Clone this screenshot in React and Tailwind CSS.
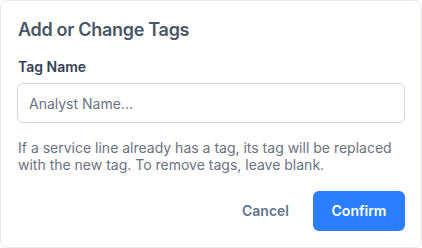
import React, { useState } from "react";

export default function App() {
  const [tag, setTag] = useState("");

  return (
    <div
      className="w-[422px] h-[248px] bg-white"
      style={{ fontFamily: "Inter, 'Noto Sans', sans-serif" }}
    >
      <div className="h-full rounded-lg border border-gray-200 bg-white px-4 pt-[15px]">
        <h2 className="pl-[1px] text-lg leading-7 font-semibold tracking-[-0.3px] text-gray-600">Add or Change Tags</h2>

        <label htmlFor="tag-name" className="mt-[13px] block pl-[1px] text-sm leading-5 font-semibold text-gray-700">
          Tag Name
        </label>
        <input
          id="tag-name"
          className="mt-[6px] block h-[40px] w-full rounded-md border border-gray-300 px-[11px] text-sm text-gray-700 placeholder:text-gray-500 outline-none"
          placeholder="Analyst Name..."
          value={tag}
          onChange={(e) => setTag(e.target.value)}
        />

        <p className="mt-[16px] pl-[1px] text-sm leading-[17px] text-gray-500">
          If a service line already has a tag, its tag will be replaced with the new tag. To remove tags, leave blank.
        </p>

        <div className="mt-[18px] flex items-center justify-end gap-[24px]">
          <button className="text-sm font-semibold text-slate-500">Cancel</button>
          <button className="h-[40px] w-[92px] rounded-md bg-blue-500 text-sm font-semibold text-white">
            Confirm
          </button>
        </div>
      </div>
    </div>
  );
}
